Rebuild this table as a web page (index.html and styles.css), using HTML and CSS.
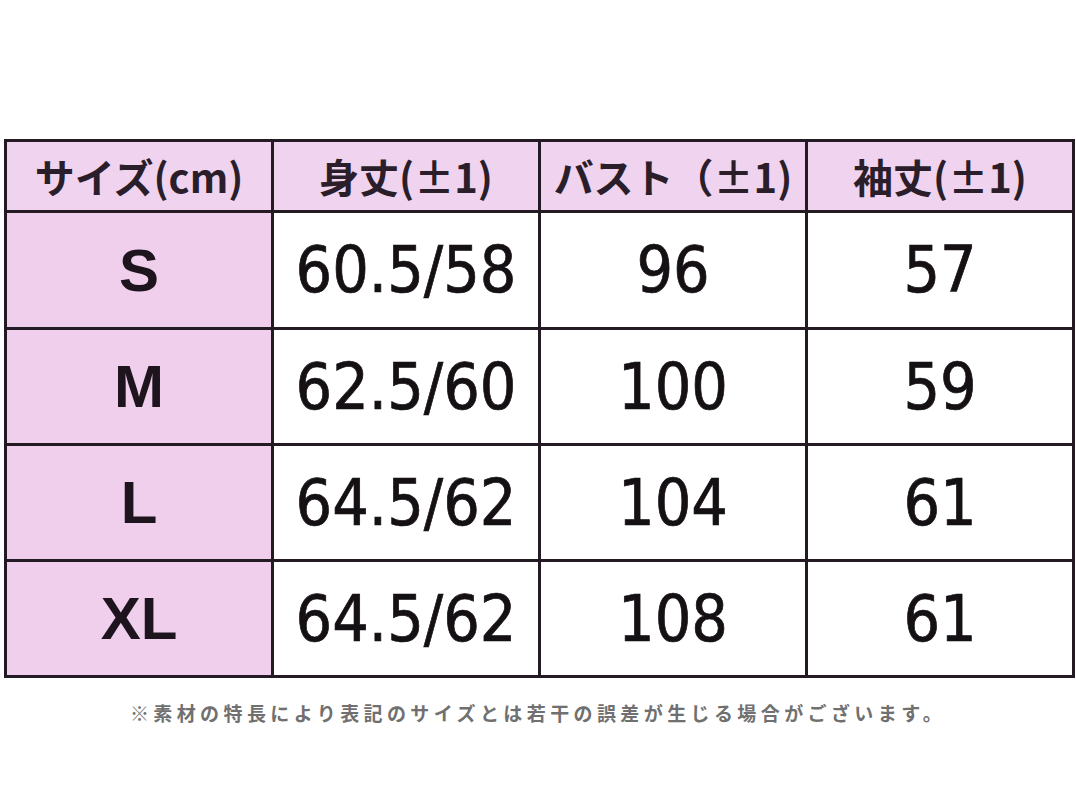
FILE: index.html
```html
<!DOCTYPE html>
<html lang="ja">
<head>
<meta charset="utf-8">
<title>サイズ表</title>
<link rel="stylesheet" href="styles.css">
</head>
<body>
<main class="page">
  <div class="chart">
    <div class="cell head">サイズ(cm)</div>
    <div class="cell head">身丈(±1)</div>
    <div class="cell head">バスト（±1)</div>
    <div class="cell head">袖丈(±1)</div>

    <div class="cell size">S</div>
    <div class="cell num">60.5/58</div>
    <div class="cell num">96</div>
    <div class="cell num">57</div>

    <div class="cell size">M</div>
    <div class="cell num">62.5/60</div>
    <div class="cell num">100</div>
    <div class="cell num">59</div>

    <div class="cell size">L</div>
    <div class="cell num">64.5/62</div>
    <div class="cell num">104</div>
    <div class="cell num">61</div>

    <div class="cell size">XL</div>
    <div class="cell num">64.5/62</div>
    <div class="cell num">108</div>
    <div class="cell num">61</div>
  </div>
  <p class="note">※素材の特長により表記のサイズとは若干の誤差が生じる場合がございます。</p>
</main>
</body>
</html>
```

FILE: styles.css
```css
html, body {
  margin: 0;
  padding: 0;
  background: #ffffff;
}

.page {
  width: 1076px;
  height: 809px;
  padding-top: 139px;
  box-sizing: border-box;
  font-family: "Noto Sans CJK JP", "Liberation Sans", sans-serif;
}

.chart {
  margin-left: 4px;
  width: 1071px;
  box-sizing: border-box;
  display: grid;
  grid-template-columns: repeat(4, 1fr);
  grid-template-rows: 68px 114px 113px 113px 113px;
  gap: 3px;
  padding: 3px;
  background: #231a23;
}

.cell {
  display: flex;
  align-items: center;
  justify-content: center;
  background: #ffffff;
  color: #1c141c;
}

.head {
  background: #f0d3ee;
  font-family: "Noto Sans CJK JP", sans-serif;
  font-weight: 700;
  font-size: 40px;
  color: #2b1e2b;
}

.size {
  background: #f0cfec;
  font-family: "Liberation Sans", Arial, sans-serif;
  font-weight: 700;
  font-size: 60px;
  color: #1e141e;
}

.num {
  font-family: "DejaVu Sans Condensed", "DejaVu Sans", sans-serif;
  font-size: 64px;
  color: #141014;
  -webkit-text-stroke: 0.7px #141014;
}

.note {
  margin: 22px 0 0;
  text-align: center;
  font-family: "Noto Sans CJK JP", sans-serif;
  font-weight: 700;
  font-size: 19px;
  letter-spacing: 4.4px;
  color: #707070;
  line-height: 26px;
}
```
